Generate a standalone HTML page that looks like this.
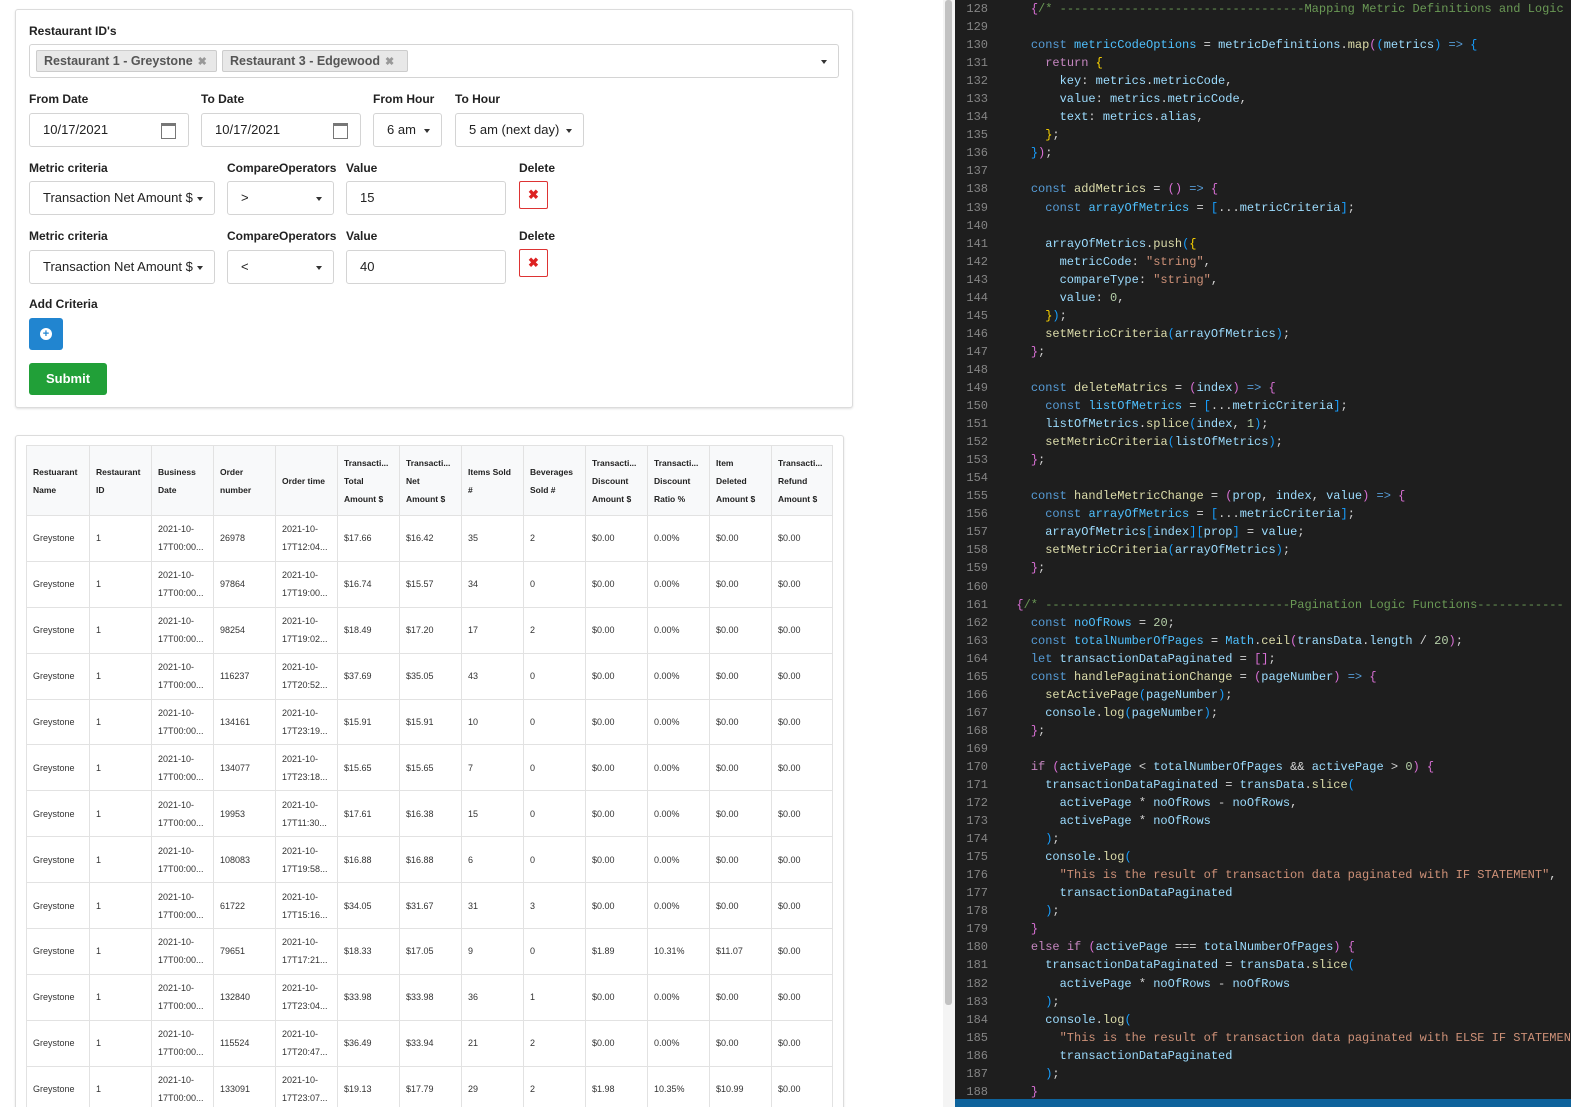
<!DOCTYPE html>
<html><head><meta charset="utf-8"><style>
*{box-sizing:border-box;margin:0;padding:0}
html,body{width:1571px;height:1107px;overflow:hidden}
body{background:#fff;font-family:"Liberation Sans",Arial,sans-serif;color:#212529;position:relative}
.card{position:absolute;border:1px solid #dcdcdc;border-radius:3px;box-shadow:0 1px 2px rgba(0,0,0,.12);background:#fff}
.lbl{position:absolute;font-size:12px;font-weight:bold;color:#222}
.inp{position:absolute;border:1px solid #d4d4d4;border-radius:3px;height:34px;font-size:13px;color:#222;line-height:32px;padding-left:13px;background:#fff}
.car{position:absolute;right:11px;top:15px;width:0;height:0;border-left:3.5px solid transparent;border-right:3.5px solid transparent;border-top:4px solid #333}
.chip{position:absolute;top:5px;height:22px;background:#e8e8e8;border:1px solid #ccc;border-radius:2px;font-size:12.5px;font-weight:bold;color:#555;line-height:20px;padding-left:7px}
.chip i{font-style:normal;color:#999;font-size:11px;margin-left:5px}
.cal{position:absolute;right:12px;top:9px;width:15px;height:16px;border:1px solid #777;border-top:3px solid #777}
.del{position:absolute;width:29px;height:28px;border:1px solid #d33;border-radius:2px;color:#d22;font-size:13px;text-align:center;line-height:26px;font-weight:bold}
table{position:absolute;left:26px;top:445px;border-collapse:collapse;table-layout:fixed;width:806px;font-size:9px;color:#333}
td,th{border:1px solid #e2e2e2;padding:0 6px;vertical-align:middle;text-align:left;white-space:nowrap;overflow:hidden;line-height:18px}
th{background:#f8f9fa;font-weight:bold;height:70px;color:#222;font-size:8.5px;white-space:normal}
td{height:45.9px}
.ed{position:absolute;left:955px;top:0;width:616px;height:1107px;background:#1e1e1e}
pre{position:absolute;left:1002px;top:0;font-family:"Liberation Mono","DejaVu Sans Mono",monospace;font-size:12px;line-height:18.05px;color:#d4d4d4;white-space:pre}
.ln{position:absolute;left:955px;width:33px;top:0;font-family:"Liberation Mono",monospace;font-size:12px;line-height:18.05px;color:#858585;text-align:right;white-space:pre}
.k{color:#569cd6}.v{color:#9cdcfe}.f{color:#dcdcaa}.c{color:#6a9955}.s{color:#ce9178}.n{color:#b5cea8}.r{color:#c586c0}.y{color:#ffd700}.p{color:#da70d6}.b{color:#179fff}.w{color:#4fc1ff}
</style></head><body>
<div class="card" style="left:15px;top:9px;width:838px;height:399px"></div>
<div class="lbl" style="left:29px;top:24px">Restaurant ID's</div>
<div class="inp" style="left:29px;top:44px;width:810px;height:34px;padding:0">
<div class="chip" style="left:6px;width:181px">Restaurant 1 - Greystone<i>✖</i></div>
<div class="chip" style="left:192px;width:186px">Restaurant 3 - Edgewood<i>✖</i></div>
<div class="car" style="top:15px"></div></div>
<div class="lbl" style="left:29px;top:92px">From Date</div>
<div class="lbl" style="left:201px;top:92px">To Date</div>
<div class="lbl" style="left:373px;top:92px">From Hour</div>
<div class="lbl" style="left:455px;top:92px">To Hour</div>
<div class="inp" style="left:29px;top:113px;width:160px">10/17/2021<div class="cal"></div></div>
<div class="inp" style="left:201px;top:113px;width:160px">10/17/2021<div class="cal"></div></div>
<div class="inp" style="left:373px;top:113px;width:69px">6 am<div class="car"></div></div>
<div class="inp" style="left:455px;top:113px;width:129px">5 am (next day)<div class="car"></div></div>

<div class="lbl" style="left:29px;top:161px">Metric criteria</div>
<div class="lbl" style="left:227px;top:161px">CompareOperators</div>
<div class="lbl" style="left:346px;top:161px">Value</div>
<div class="lbl" style="left:519px;top:161px">Delete</div>
<div class="inp" style="left:29px;top:181px;width:186px">Transaction Net Amount $<div class="car"></div></div>
<div class="inp" style="left:227px;top:181px;width:107px">&gt;<div class="car"></div></div>
<div class="inp" style="left:346px;top:181px;width:160px">15</div>
<div class="del" style="left:519px;top:181px">✖</div>

<div class="lbl" style="left:29px;top:229px">Metric criteria</div>
<div class="lbl" style="left:227px;top:229px">CompareOperators</div>
<div class="lbl" style="left:346px;top:229px">Value</div>
<div class="lbl" style="left:519px;top:229px">Delete</div>
<div class="inp" style="left:29px;top:250px;width:186px">Transaction Net Amount $<div class="car"></div></div>
<div class="inp" style="left:227px;top:250px;width:107px">&lt;<div class="car"></div></div>
<div class="inp" style="left:346px;top:250px;width:160px">40</div>
<div class="del" style="left:519px;top:249px">✖</div>

<div class="lbl" style="left:29px;top:297px">Add Criteria</div>
<div style="position:absolute;left:29px;top:318px;width:34px;height:32px;background:#2185d0;border-radius:3px"><div style="position:absolute;left:11px;top:10px;width:12px;height:12px;border-radius:50%;background:#fff;color:#2185d0;font-size:11px;font-weight:bold;line-height:12px;text-align:center">+</div></div>
<div style="position:absolute;left:29px;top:363px;width:78px;height:32px;background:#21a038;border-radius:3px;color:#fff;font-size:13px;font-weight:bold;text-align:center;line-height:32px">Submit</div>

<div class="card" style="left:15px;top:435px;width:829px;height:690px"></div>
<table>
<colgroup><col style="width:63px"><col style="width:62px"><col style="width:62px"><col style="width:62px"><col style="width:62px"><col style="width:62px"><col style="width:62px"><col style="width:62px"><col style="width:62px"><col style="width:62px"><col style="width:62px"><col style="width:62px"><col style="width:61px"></colgroup>
<tr><th>Restuarant<br>Name</th><th>Restaurant<br>ID</th><th>Business<br>Date</th><th>Order<br>number</th><th>Order time</th><th>Transacti...<br>Total<br>Amount $</th><th>Transacti...<br>Net<br>Amount $</th><th>Items Sold<br>#</th><th>Beverages<br>Sold #</th><th>Transacti...<br>Discount<br>Amount $</th><th>Transacti...<br>Discount<br>Ratio %</th><th>Item<br>Deleted<br>Amount $</th><th>Transacti...<br>Refund<br>Amount $</th></tr>
<tr><td>Greystone</td><td>1</td><td>2021-10-<br>17T00:00...</td><td>26978</td><td>2021-10-<br>17T12:04...</td><td>$17.66</td><td>$16.42</td><td>35</td><td>2</td><td>$0.00</td><td>0.00%</td><td>$0.00</td><td>$0.00</td></tr>
<tr><td>Greystone</td><td>1</td><td>2021-10-<br>17T00:00...</td><td>97864</td><td>2021-10-<br>17T19:00...</td><td>$16.74</td><td>$15.57</td><td>34</td><td>0</td><td>$0.00</td><td>0.00%</td><td>$0.00</td><td>$0.00</td></tr>
<tr><td>Greystone</td><td>1</td><td>2021-10-<br>17T00:00...</td><td>98254</td><td>2021-10-<br>17T19:02...</td><td>$18.49</td><td>$17.20</td><td>17</td><td>2</td><td>$0.00</td><td>0.00%</td><td>$0.00</td><td>$0.00</td></tr>
<tr><td>Greystone</td><td>1</td><td>2021-10-<br>17T00:00...</td><td>116237</td><td>2021-10-<br>17T20:52...</td><td>$37.69</td><td>$35.05</td><td>43</td><td>0</td><td>$0.00</td><td>0.00%</td><td>$0.00</td><td>$0.00</td></tr>
<tr><td>Greystone</td><td>1</td><td>2021-10-<br>17T00:00...</td><td>134161</td><td>2021-10-<br>17T23:19...</td><td>$15.91</td><td>$15.91</td><td>10</td><td>0</td><td>$0.00</td><td>0.00%</td><td>$0.00</td><td>$0.00</td></tr>
<tr><td>Greystone</td><td>1</td><td>2021-10-<br>17T00:00...</td><td>134077</td><td>2021-10-<br>17T23:18...</td><td>$15.65</td><td>$15.65</td><td>7</td><td>0</td><td>$0.00</td><td>0.00%</td><td>$0.00</td><td>$0.00</td></tr>
<tr><td>Greystone</td><td>1</td><td>2021-10-<br>17T00:00...</td><td>19953</td><td>2021-10-<br>17T11:30...</td><td>$17.61</td><td>$16.38</td><td>15</td><td>0</td><td>$0.00</td><td>0.00%</td><td>$0.00</td><td>$0.00</td></tr>
<tr><td>Greystone</td><td>1</td><td>2021-10-<br>17T00:00...</td><td>108083</td><td>2021-10-<br>17T19:58...</td><td>$16.88</td><td>$16.88</td><td>6</td><td>0</td><td>$0.00</td><td>0.00%</td><td>$0.00</td><td>$0.00</td></tr>
<tr><td>Greystone</td><td>1</td><td>2021-10-<br>17T00:00...</td><td>61722</td><td>2021-10-<br>17T15:16...</td><td>$34.05</td><td>$31.67</td><td>31</td><td>3</td><td>$0.00</td><td>0.00%</td><td>$0.00</td><td>$0.00</td></tr>
<tr><td>Greystone</td><td>1</td><td>2021-10-<br>17T00:00...</td><td>79651</td><td>2021-10-<br>17T17:21...</td><td>$18.33</td><td>$17.05</td><td>9</td><td>0</td><td>$1.89</td><td>10.31%</td><td>$11.07</td><td>$0.00</td></tr>
<tr><td>Greystone</td><td>1</td><td>2021-10-<br>17T00:00...</td><td>132840</td><td>2021-10-<br>17T23:04...</td><td>$33.98</td><td>$33.98</td><td>36</td><td>1</td><td>$0.00</td><td>0.00%</td><td>$0.00</td><td>$0.00</td></tr>
<tr><td>Greystone</td><td>1</td><td>2021-10-<br>17T00:00...</td><td>115524</td><td>2021-10-<br>17T20:47...</td><td>$36.49</td><td>$33.94</td><td>21</td><td>2</td><td>$0.00</td><td>0.00%</td><td>$0.00</td><td>$0.00</td></tr>
<tr><td>Greystone</td><td>1</td><td>2021-10-<br>17T00:00...</td><td>133091</td><td>2021-10-<br>17T23:07...</td><td>$19.13</td><td>$17.79</td><td>29</td><td>2</td><td>$1.98</td><td>10.35%</td><td>$10.99</td><td>$0.00</td></tr>
</table>

<div style="position:absolute;left:943px;top:0;width:12px;height:1107px;background:#f4f4f4"></div>
<div style="position:absolute;left:945px;top:0;width:7px;height:1005px;background:#c2c2c2;border-radius:3px"></div>
<div class="ed"></div>
<div style="position:absolute;left:955px;top:1099px;width:616px;height:8px;background:#0e639c"></div>
<div class="ln">128
129
130
131
132
133
134
135
136
137
138
139
140
141
142
143
144
145
146
147
148
149
150
151
152
153
154
155
156
157
158
159
160
161
162
163
164
165
166
167
168
169
170
171
172
173
174
175
176
177
178
179
180
181
182
183
184
185
186
187
188</div>
<pre>    <span class="p">{</span><span class="c">/* ----------------------------------Mapping Metric Definitions and Logic</span>

    <span class="k">const</span> <span class="w">metricCodeOptions</span> = <span class="v">metricDefinitions</span>.<span class="f">map</span><span class="p">(</span><span class="b">(</span><span class="v">metrics</span><span class="b">)</span> <span class="k">=&gt;</span> <span class="b">{</span>
      <span class="r">return</span> <span class="y">{</span>
        <span class="v">key</span>: <span class="v">metrics</span>.<span class="v">metricCode</span>,
        <span class="v">value</span>: <span class="v">metrics</span>.<span class="v">metricCode</span>,
        <span class="v">text</span>: <span class="v">metrics</span>.<span class="v">alias</span>,
      <span class="y">}</span>;
    <span class="b">}</span><span class="p">)</span>;

    <span class="k">const</span> <span class="f">addMetrics</span> = <span class="p">()</span> <span class="k">=&gt;</span> <span class="p">{</span>
      <span class="k">const</span> <span class="w">arrayOfMetrics</span> = <span class="b">[</span>...<span class="v">metricCriteria</span><span class="b">]</span>;

      <span class="v">arrayOfMetrics</span>.<span class="f">push</span><span class="b">(</span><span class="y">{</span>
        <span class="v">metricCode</span>: <span class="s">"string"</span>,
        <span class="v">compareType</span>: <span class="s">"string"</span>,
        <span class="v">value</span>: <span class="n">0</span>,
      <span class="y">}</span><span class="b">)</span>;
      <span class="f">setMetricCriteria</span><span class="b">(</span><span class="v">arrayOfMetrics</span><span class="b">)</span>;
    <span class="p">}</span>;

    <span class="k">const</span> <span class="f">deleteMatrics</span> = <span class="p">(</span><span class="v">index</span><span class="p">)</span> <span class="k">=&gt;</span> <span class="p">{</span>
      <span class="k">const</span> <span class="w">listOfMetrics</span> = <span class="b">[</span>...<span class="v">metricCriteria</span><span class="b">]</span>;
      <span class="v">listOfMetrics</span>.<span class="f">splice</span><span class="b">(</span><span class="v">index</span>, <span class="n">1</span><span class="b">)</span>;
      <span class="f">setMetricCriteria</span><span class="b">(</span><span class="v">listOfMetrics</span><span class="b">)</span>;
    <span class="p">}</span>;

    <span class="k">const</span> <span class="f">handleMetricChange</span> = <span class="p">(</span><span class="v">prop</span>, <span class="v">index</span>, <span class="v">value</span><span class="p">)</span> <span class="k">=&gt;</span> <span class="p">{</span>
      <span class="k">const</span> <span class="w">arrayOfMetrics</span> = <span class="b">[</span>...<span class="v">metricCriteria</span><span class="b">]</span>;
      <span class="v">arrayOfMetrics</span><span class="b">[</span><span class="v">index</span><span class="b">][</span><span class="v">prop</span><span class="b">]</span> = <span class="v">value</span>;
      <span class="f">setMetricCriteria</span><span class="b">(</span><span class="v">arrayOfMetrics</span><span class="b">)</span>;
    <span class="p">}</span>;

  <span class="p">{</span><span class="c">/* ----------------------------------Pagination Logic Functions------------</span>
    <span class="k">const</span> <span class="w">noOfRows</span> = <span class="n">20</span>;
    <span class="k">const</span> <span class="w">totalNumberOfPages</span> = <span class="w">Math</span>.<span class="f">ceil</span><span class="p">(</span><span class="v">transData</span>.<span class="v">length</span> / <span class="n">20</span><span class="p">)</span>;
    <span class="k">let</span> <span class="v">transactionDataPaginated</span> = <span class="p">[]</span>;
    <span class="k">const</span> <span class="f">handlePaginationChange</span> = <span class="p">(</span><span class="v">pageNumber</span><span class="p">)</span> <span class="k">=&gt;</span> <span class="p">{</span>
      <span class="f">setActivePage</span><span class="b">(</span><span class="v">pageNumber</span><span class="b">)</span>;
      <span class="v">console</span>.<span class="f">log</span><span class="b">(</span><span class="v">pageNumber</span><span class="b">)</span>;
    <span class="p">}</span>;

    <span class="r">if</span> <span class="p">(</span><span class="v">activePage</span> &lt; <span class="v">totalNumberOfPages</span> &amp;&amp; <span class="v">activePage</span> &gt; <span class="n">0</span><span class="p">)</span> <span class="p">{</span>
      <span class="v">transactionDataPaginated</span> = <span class="v">transData</span>.<span class="f">slice</span><span class="b">(</span>
        <span class="v">activePage</span> * <span class="v">noOfRows</span> - <span class="v">noOfRows</span>,
        <span class="v">activePage</span> * <span class="v">noOfRows</span>
      <span class="b">)</span>;
      <span class="v">console</span>.<span class="f">log</span><span class="b">(</span>
        <span class="s">"This is the result of transaction data paginated with IF STATEMENT"</span>,
        <span class="v">transactionDataPaginated</span>
      <span class="b">)</span>;
    <span class="p">}</span>
    <span class="r">else if</span> <span class="p">(</span><span class="v">activePage</span> === <span class="v">totalNumberOfPages</span><span class="p">)</span> <span class="p">{</span>
      <span class="v">transactionDataPaginated</span> = <span class="v">transData</span>.<span class="f">slice</span><span class="b">(</span>
        <span class="v">activePage</span> * <span class="v">noOfRows</span> - <span class="v">noOfRows</span>
      <span class="b">)</span>;
      <span class="v">console</span>.<span class="f">log</span><span class="b">(</span>
        <span class="s">"This is the result of transaction data paginated with ELSE IF STATEMENT"</span>,
        <span class="v">transactionDataPaginated</span>
      <span class="b">)</span>;
    <span class="p">}</span></pre>
</body></html>
